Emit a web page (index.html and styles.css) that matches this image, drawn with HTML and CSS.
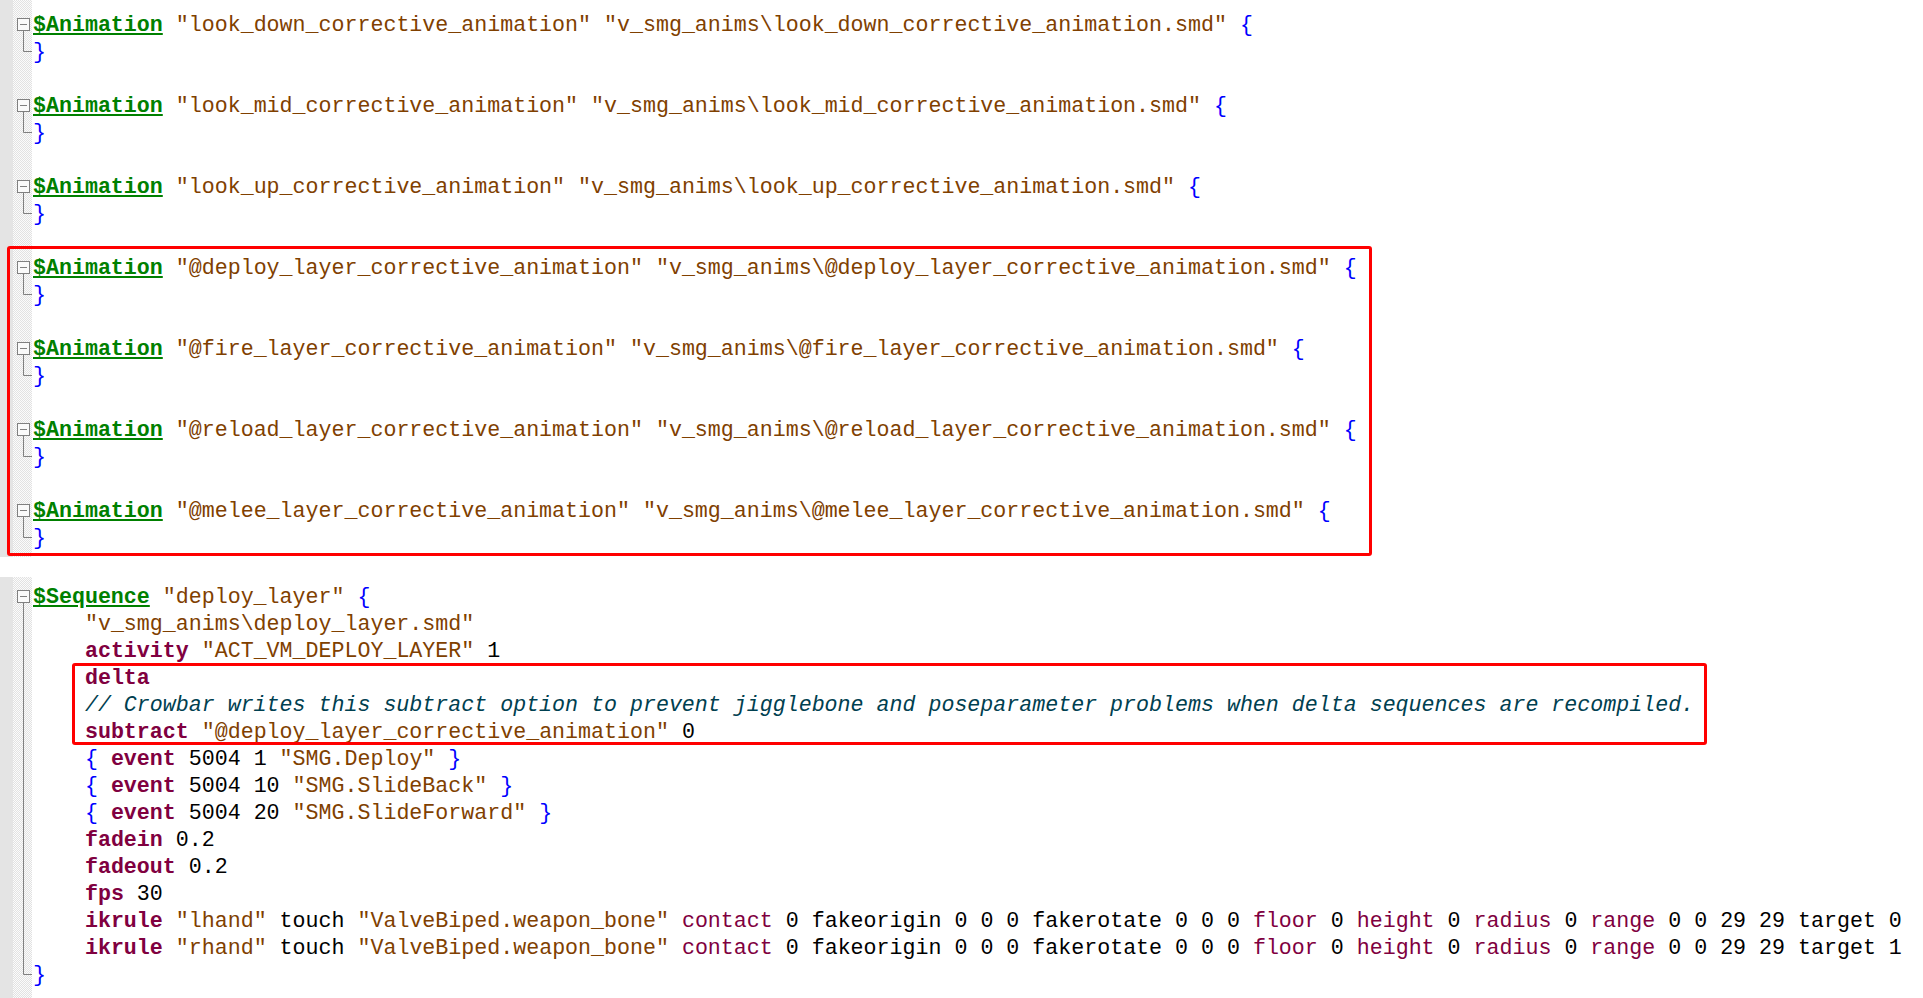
FILE: index.html
```html
<!DOCTYPE html>
<html lang="en">
<head>
<meta charset="utf-8">
<title>qc editor</title>
<link rel="stylesheet" href="styles.css">
</head>
<body>
<svg class="defs" width="0" height="0" aria-hidden="true">
  <defs>
    <symbol id="f-open" viewBox="0 0 19 27">
      <rect x="4.5" y="6.5" width="12" height="12" fill="#fafafa" stroke="#808080"/>
      <path d="M7 12.5H14M10.5 18.5V27" stroke="#808080" fill="none"/>
    </symbol>
    <symbol id="f-mid" viewBox="0 0 19 27">
      <path d="M10.5 0V27" stroke="#808080" fill="none"/>
    </symbol>
    <symbol id="f-end" viewBox="0 0 19 27">
      <path d="M10.5 0V12.5H19" stroke="#808080" fill="none"/>
    </symbol>
  </defs>
</svg>

<div class="editor">
  <section class="pane pane-top">
    <div class="margin"></div>
    <div class="folds">
      <svg class="fm"><use href="#f-open"/></svg>
      <svg class="fm"><use href="#f-end"/></svg>
      <div class="fm"></div>
      <svg class="fm"><use href="#f-open"/></svg>
      <svg class="fm"><use href="#f-end"/></svg>
      <div class="fm"></div>
      <svg class="fm"><use href="#f-open"/></svg>
      <svg class="fm"><use href="#f-end"/></svg>
      <div class="fm"></div>
      <svg class="fm"><use href="#f-open"/></svg>
      <svg class="fm"><use href="#f-end"/></svg>
      <div class="fm"></div>
      <svg class="fm"><use href="#f-open"/></svg>
      <svg class="fm"><use href="#f-end"/></svg>
      <div class="fm"></div>
      <svg class="fm"><use href="#f-open"/></svg>
      <svg class="fm"><use href="#f-end"/></svg>
      <div class="fm"></div>
      <svg class="fm"><use href="#f-open"/></svg>
      <svg class="fm"><use href="#f-end"/></svg>
    </div>
    <div class="code">
      <div class="ln"><span class="d">$Animation</span> <span class="s">"look_down_corrective_animation"</span> <span class="s">"v_smg_anims\look_down_corrective_animation.smd"</span> <span class="b">{</span></div>
      <div class="ln"><span class="b">}</span></div>
      <div class="ln"></div>
      <div class="ln"><span class="d">$Animation</span> <span class="s">"look_mid_corrective_animation"</span> <span class="s">"v_smg_anims\look_mid_corrective_animation.smd"</span> <span class="b">{</span></div>
      <div class="ln"><span class="b">}</span></div>
      <div class="ln"></div>
      <div class="ln"><span class="d">$Animation</span> <span class="s">"look_up_corrective_animation"</span> <span class="s">"v_smg_anims\look_up_corrective_animation.smd"</span> <span class="b">{</span></div>
      <div class="ln"><span class="b">}</span></div>
      <div class="ln"></div>
      <div class="ln"><span class="d">$Animation</span> <span class="s">"@deploy_layer_corrective_animation"</span> <span class="s">"v_smg_anims\@deploy_layer_corrective_animation.smd"</span> <span class="b">{</span></div>
      <div class="ln"><span class="b">}</span></div>
      <div class="ln"></div>
      <div class="ln"><span class="d">$Animation</span> <span class="s">"@fire_layer_corrective_animation"</span> <span class="s">"v_smg_anims\@fire_layer_corrective_animation.smd"</span> <span class="b">{</span></div>
      <div class="ln"><span class="b">}</span></div>
      <div class="ln"></div>
      <div class="ln"><span class="d">$Animation</span> <span class="s">"@reload_layer_corrective_animation"</span> <span class="s">"v_smg_anims\@reload_layer_corrective_animation.smd"</span> <span class="b">{</span></div>
      <div class="ln"><span class="b">}</span></div>
      <div class="ln"></div>
      <div class="ln"><span class="d">$Animation</span> <span class="s">"@melee_layer_corrective_animation"</span> <span class="s">"v_smg_anims\@melee_layer_corrective_animation.smd"</span> <span class="b">{</span></div>
      <div class="ln"><span class="b">}</span></div>
    </div>
    <div class="hl hl-anims"></div>
  </section>

  <section class="pane pane-bottom">
    <div class="margin"></div>
    <div class="folds">
      <svg class="fm"><use href="#f-open"/></svg>
      <svg class="fm"><use href="#f-mid"/></svg>
      <svg class="fm"><use href="#f-mid"/></svg>
      <svg class="fm"><use href="#f-mid"/></svg>
      <svg class="fm"><use href="#f-mid"/></svg>
      <svg class="fm"><use href="#f-mid"/></svg>
      <svg class="fm"><use href="#f-mid"/></svg>
      <svg class="fm"><use href="#f-mid"/></svg>
      <svg class="fm"><use href="#f-mid"/></svg>
      <svg class="fm"><use href="#f-mid"/></svg>
      <svg class="fm"><use href="#f-mid"/></svg>
      <svg class="fm"><use href="#f-mid"/></svg>
      <svg class="fm"><use href="#f-mid"/></svg>
      <svg class="fm"><use href="#f-mid"/></svg>
      <svg class="fm"><use href="#f-end"/></svg>
    </div>
    <div class="code">
      <div class="ln"><span class="d">$Sequence</span> <span class="s">"deploy_layer"</span> <span class="b">{</span></div>
      <div class="ln">    <span class="s">"v_smg_anims\deploy_layer.smd"</span></div>
      <div class="ln">    <span class="kw">activity</span> <span class="s">"ACT_VM_DEPLOY_LAYER"</span> 1</div>
      <div class="ln">    <span class="kw">delta</span></div>
      <div class="ln">    <span class="c">// Crowbar writes this subtract option to prevent jigglebone and poseparameter problems when delta sequences are recompiled.</span></div>
      <div class="ln">    <span class="kw">subtract</span> <span class="s">"@deploy_layer_corrective_animation"</span> 0</div>
      <div class="ln">    <span class="b">{</span> <span class="kw">event</span> 5004 1 <span class="s">"SMG.Deploy"</span> <span class="b">}</span></div>
      <div class="ln">    <span class="b">{</span> <span class="kw">event</span> 5004 10 <span class="s">"SMG.SlideBack"</span> <span class="b">}</span></div>
      <div class="ln">    <span class="b">{</span> <span class="kw">event</span> 5004 20 <span class="s">"SMG.SlideForward"</span> <span class="b">}</span></div>
      <div class="ln">    <span class="kw">fadein</span> 0.2</div>
      <div class="ln">    <span class="kw">fadeout</span> 0.2</div>
      <div class="ln">    <span class="kw">fps</span> 30</div>
      <div class="ln">    <span class="kw">ikrule</span> <span class="s">"lhand"</span> touch <span class="s">"ValveBiped.weapon_bone"</span> <span class="kw2">contact</span> 0 fakeorigin 0 0 0 fakerotate 0 0 0 <span class="kw2">floor</span> 0 <span class="kw2">height</span> 0 <span class="kw2">radius</span> 0 <span class="kw2">range</span> 0 0 29 29 target 0</div>
      <div class="ln">    <span class="kw">ikrule</span> <span class="s">"rhand"</span> touch <span class="s">"ValveBiped.weapon_bone"</span> <span class="kw2">contact</span> 0 fakeorigin 0 0 0 fakerotate 0 0 0 <span class="kw2">floor</span> 0 <span class="kw2">height</span> 0 <span class="kw2">radius</span> 0 <span class="kw2">range</span> 0 0 29 29 target 1</div>
      <div class="ln"><span class="b">}</span></div>
    </div>
    <div class="hl hl-delta"></div>
  </section>
</div>
</body>
</html>
```

FILE: styles.css
```css
html, body {
  margin: 0;
  padding: 0;
  background: #ffffff;
}

body {
  width: 1923px;
  height: 998px;
  overflow: hidden;
  font-family: "Liberation Mono", "DejaVu Sans Mono", monospace;
}

.defs {
  position: absolute;
  width: 0;
  height: 0;
}

.editor {
  display: flex;
  flex-direction: column;
  gap: 20px;
}

.pane {
  position: relative;
  display: grid;
  grid-template-columns: 13px 19px 1fr;
  overflow: hidden;
}

.pane-top {
  height: 557px;
  --pad: 12px;
}

.pane-bottom {
  height: 421px;
  --pad: 7px;
}

.margin {
  background: #e4e4e4;
}

.folds {
  padding-top: var(--pad);
  background: repeating-conic-gradient(#e2e2e2 0 25%, #fbfbfb 0 50%) 0 0 / 2px 2px;
}

.fm {
  display: block;
  width: 19px;
  height: 27px;
}

.code {
  padding-top: var(--pad);
  padding-left: 1px;
  font-size: 21.64px;
  line-height: 27px;
  color: #000000;
}

.ln {
  height: 27px;
  white-space: pre;
}

.d {
  color: #008000;
  font-weight: bold;
  text-decoration: underline;
  text-underline-offset: 2px;
}

.s {
  color: #804000;
}

.b {
  color: #0000ff;
}

.kw {
  color: #800040;
  font-weight: bold;
}

.kw2 {
  color: #800040;
}

.c {
  color: #004050;
  font-style: italic;
}

.hl {
  position: absolute;
  box-sizing: border-box;
  border: 3px solid #ff0000;
  border-radius: 3px;
  pointer-events: none;
}

.hl-anims {
  left: 7px;
  top: 246px;
  width: 1365px;
  height: 310px;
}

.hl-delta {
  left: 72px;
  top: 86px;
  width: 1635px;
  height: 82px;
}
```
